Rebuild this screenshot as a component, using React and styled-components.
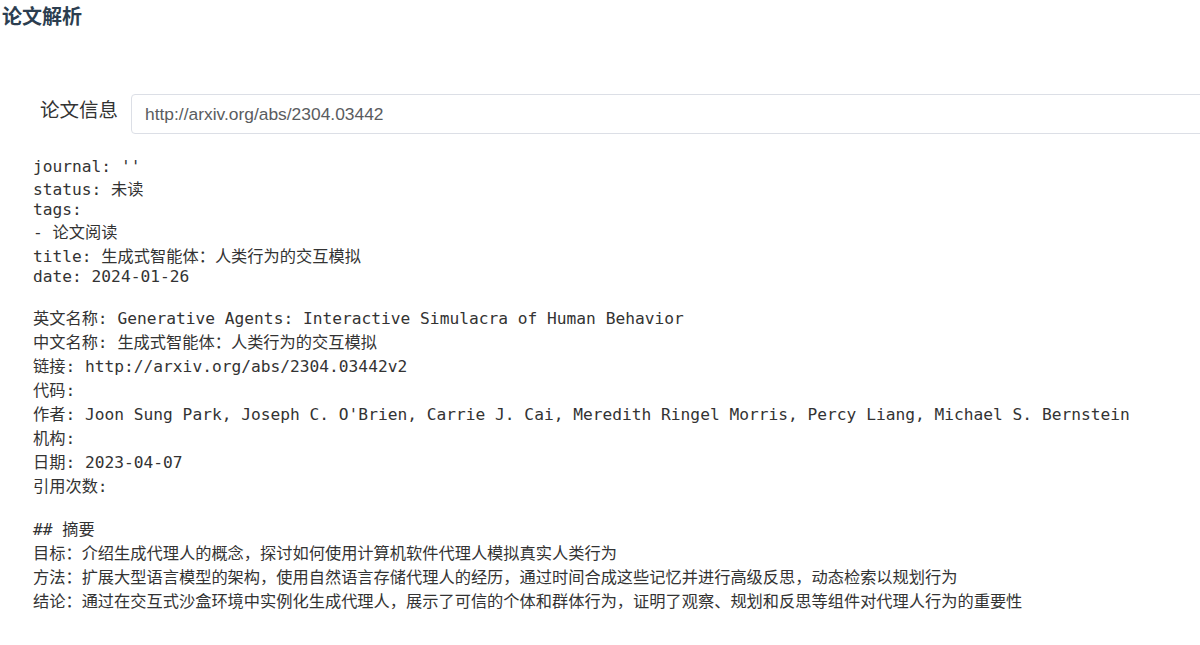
import styled, { createGlobalStyle } from "styled-components";

const Global = createGlobalStyle`
  html, body {
    margin: 0;
    padding: 0;
    background: #fff;
    overflow: hidden;
  }
  #root {
    overflow: hidden;
  }
`;

const Page = styled.div`
  width: 1200px;
  overflow: hidden;
`;

const Title = styled.h3`
  margin: 0;
  padding: 1px 0 0 2px;
  font-family: "Noto Sans CJK SC", "Noto Sans", sans-serif;
  font-size: 20px;
  font-weight: 700;
  color: #2c3e50;
  line-height: 29px;
`;

const FormRow = styled.div`
  display: flex;
  align-items: center;
  margin-top: 64px;
  padding-left: 40px;
`;

const Label = styled.label`
  font-family: "Noto Sans CJK SC", "Noto Sans", sans-serif;
  font-size: 19.5px;
  color: #333;
  margin-right: 13px;
  margin-top: -11px;
  white-space: nowrap;
`;

const UrlInput = styled.input`
  flex: 1;
  margin-right: -40px;
  height: 40px;
  box-sizing: border-box;
  border: 1px solid #dcdfe6;
  border-radius: 4px;
  padding: 0 13px;
  font-family: "Liberation Sans", Arial, sans-serif;
  font-size: 17.4px;
  color: #5a5c60;
  outline: none;
`;

const Output = styled.pre`
  margin: 23px 0 0 33px;
  font-family: "DejaVu Sans Mono", "Noto Sans CJK SC", monospace;
  font-size: 16.23px;
  color: #333;
  white-space: pre-wrap;
`;

const content = `journal: ''
status: 未读
tags:
- 论文阅读
title: 生成式智能体：人类行为的交互模拟
date: 2024-01-26

英文名称: Generative Agents: Interactive Simulacra of Human Behavior
中文名称: 生成式智能体：人类行为的交互模拟
链接: http://arxiv.org/abs/2304.03442v2
代码:
作者: Joon Sung Park, Joseph C. O'Brien, Carrie J. Cai, Meredith Ringel Morris, Percy Liang, Michael S. Bernstein
机构:
日期: 2023-04-07
引用次数:

## 摘要
目标：介绍生成代理人的概念，探讨如何使用计算机软件代理人模拟真实人类行为
方法：扩展大型语言模型的架构，使用自然语言存储代理人的经历，通过时间合成这些记忆并进行高级反思，动态检索以规划行为
结论：通过在交互式沙盒环境中实例化生成代理人，展示了可信的个体和群体行为，证明了观察、规划和反思等组件对代理人行为的重要性`;

export default function App() {
  return (
    <Page>
      <Global />
      <Title>论文解析</Title>
      <FormRow>
        <Label>论文信息</Label>
        <UrlInput defaultValue="http://arxiv.org/abs/2304.03442" />
      </FormRow>
      <Output>{content}</Output>
    </Page>
  );
}
